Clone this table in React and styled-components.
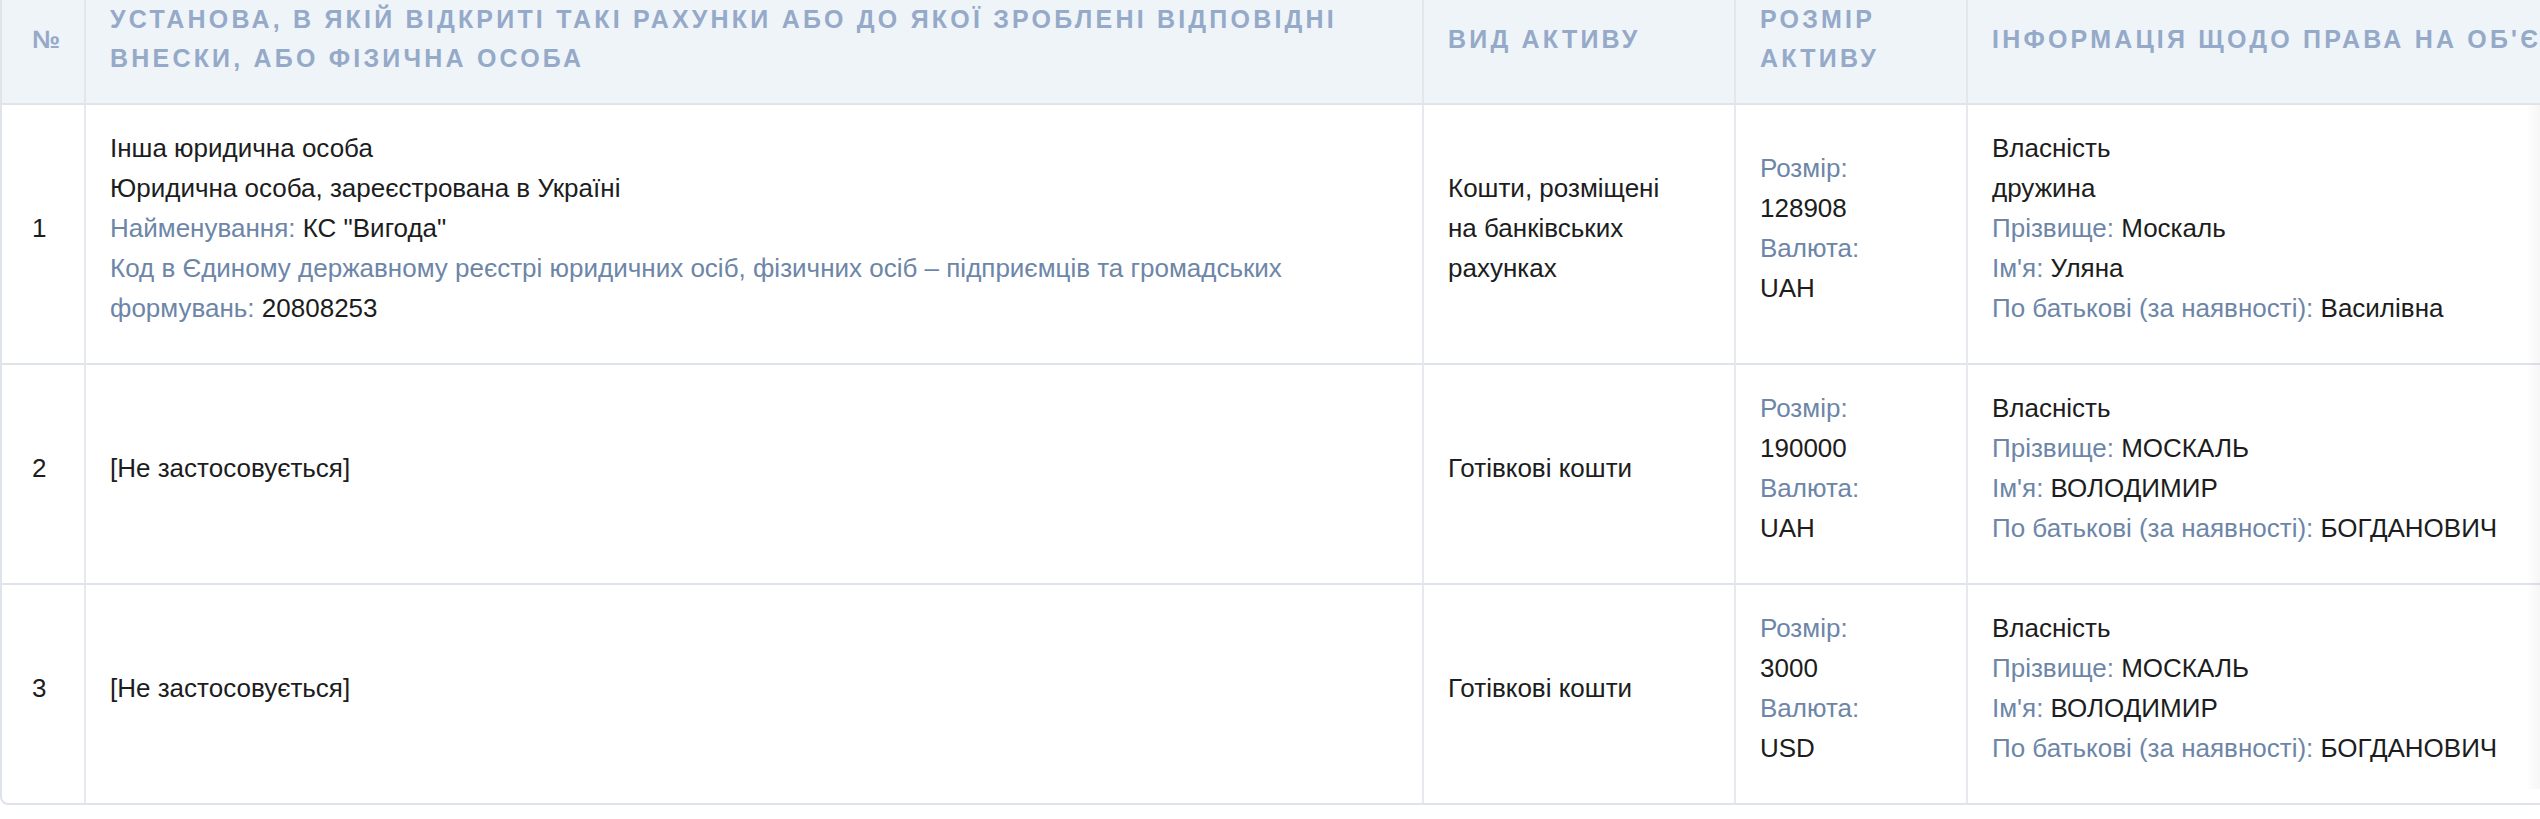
import React from "react";
import styled, { createGlobalStyle } from "styled-components";

const GlobalStyle = createGlobalStyle`
  html, body {
    margin: 0;
    padding: 0;
    background: #ffffff;
  }
  body {
    font-family: "Liberation Sans", Arial, sans-serif;
    color: #1f2023;
  }
`;

const Viewport = styled.div`
  position: relative;
  width: 100%;
  overflow: hidden;
`;

const Frame = styled.div`
  margin-top: -26px;
  width: 2780px;
  border: 2px solid #dfe3ea;
  border-radius: 8px;
  overflow: hidden;
`;

const RightShade = styled.div`
  position: absolute;
  top: 105px;
  right: 0;
  bottom: 16px;
  width: 14px;
  background: linear-gradient(to right, rgba(0, 0, 0, 0), rgba(0, 0, 0, 0.035));
  pointer-events: none;
`;

const Table = styled.table`
  width: 100%;
  table-layout: fixed;
  border-collapse: separate;
  border-spacing: 0;
`;

const Th = styled.th`
  box-sizing: border-box;
  width: ${({ $w }) => $w}px;
  background: #eff4f9;
  color: #95a9c8;
  font-size: 25px;
  font-weight: 700;
  line-height: 39px;
  letter-spacing: 3.2px;
  text-transform: uppercase;
  text-align: left;
  vertical-align: middle;
  padding: ${({ $num }) => ($num ? "24px 0 25px 30px" : "24px 24px 25px")};
  border-bottom: 2px solid #dfe3ea;
  border-right: 2px solid #e3e7ed;
  white-space: ${({ $nowrap }) => ($nowrap ? "nowrap" : "normal")};
  &:last-child {
    border-right: none;
  }
`;

const Row = styled.tr`
  &:last-child td {
    border-bottom: none;
  }
`;

const Td = styled.td`
  box-sizing: border-box;
  font-size: 26px;
  line-height: 40px;
  color: #1c1d20;
  vertical-align: middle;
  padding: ${({ $num, $pr = 24 }) =>
    $num ? "23px 0 35px 30px" : `23px ${$pr}px 35px 24px`};
  border-bottom: 2px solid #dfe3ea;
  border-right: 2px solid #e6e9ee;
  &:last-child {
    border-right: none;
  }
`;

const Line = styled.div`
  white-space: ${({ $nowrap }) => ($nowrap ? "nowrap" : "normal")};
`;

const Label = styled.span`
  color: #6d86a8;
`;

const columns = [
  { key: "num", title: "№", width: 84, num: true },
  {
    key: "inst",
    title:
      "Установа, в якій відкриті такі рахунки або до якої зроблені відповідні внески, або фізична особа",
    width: 1338,
  },
  { key: "type", title: "Вид активу", width: 312 },
  { key: "size", title: "Розмір активу", width: 232 },
  {
    key: "owner",
    title: "Інформація щодо права на об'єкт",
    width: 814,
    nowrap: true,
  },
];

const rows = [
  {
    id: 1,
    inst: [
      { text: "Інша юридична особа" },
      { text: "Юридична особа, зареєстрована в Україні" },
      { label: "Найменування:", text: 'КС "Вигода"' },
      {
        label:
          "Код в Єдиному державному реєстрі юридичних осіб, фізичних осіб – підприємців та громадських формувань:",
        text: "20808253",
      },
    ],
    type: "Кошти, розміщені на банківських рахунках",
    size: "128908",
    currency: "UAH",
    owner: [
      { text: "Власність" },
      { text: "дружина" },
      { label: "Прізвище:", text: "Москаль" },
      { label: "Ім'я:", text: "Уляна" },
      { label: "По батькові (за наявності):", text: "Василівна" },
    ],
  },
  {
    id: 2,
    inst: [{ text: "[Не застосовується]" }],
    type: "Готівкові кошти",
    size: "190000",
    currency: "UAH",
    owner: [
      { text: "Власність" },
      { label: "Прізвище:", text: "МОСКАЛЬ" },
      { label: "Ім'я:", text: "ВОЛОДИМИР" },
      { label: "По батькові (за наявності):", text: "БОГДАНОВИЧ" },
    ],
  },
  {
    id: 3,
    inst: [{ text: "[Не застосовується]" }],
    type: "Готівкові кошти",
    size: "3000",
    currency: "USD",
    owner: [
      { text: "Власність" },
      { label: "Прізвище:", text: "МОСКАЛЬ" },
      { label: "Ім'я:", text: "ВОЛОДИМИР" },
      { label: "По батькові (за наявності):", text: "БОГДАНОВИЧ" },
    ],
  },
];

const Field = ({ label, text, nowrap }) => (
  <Line $nowrap={nowrap}>
    {label && <Label>{label} </Label>}
    {text}
  </Line>
);

const App = () => {
  return (
    <>
      <GlobalStyle />
      <Viewport>
        <Frame>
          <Table>
            <thead>
              <tr>
                {columns.map((col) => (
                  <Th
                    key={col.key}
                    $w={col.width}
                    $num={col.num}
                    $nowrap={col.nowrap}
                  >
                    {col.title}
                  </Th>
                ))}
              </tr>
            </thead>
            <tbody>
              {rows.map((row) => (
                <Row key={row.id}>
                  <Td $num>{row.id}</Td>
                  <Td>
                    {row.inst.map((f, i) => (
                      <Field key={i} {...f} />
                    ))}
                  </Td>
                  <Td $pr={44}>{row.type}</Td>
                  <Td>
                    <Line>
                      <Label>Розмір:</Label>
                    </Line>
                    <Line>{row.size}</Line>
                    <Line>
                      <Label>Валюта:</Label>
                    </Line>
                    <Line>{row.currency}</Line>
                  </Td>
                  <Td>
                    {row.owner.map((f, i) => (
                      <Field key={i} nowrap {...f} />
                    ))}
                  </Td>
                </Row>
              ))}
            </tbody>
          </Table>
        </Frame>
        <RightShade />
      </Viewport>
    </>
  );
};

export default App;
